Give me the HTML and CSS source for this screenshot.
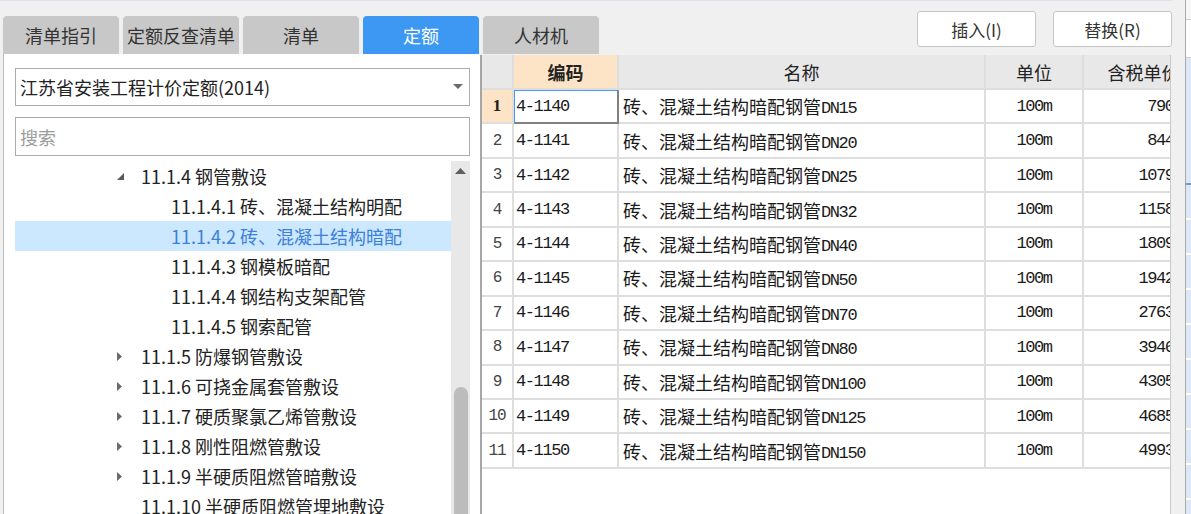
FILE: index.html
```html
<!DOCTYPE html>
<html lang="zh-CN">
<head>
<meta charset="utf-8">
<title>定额</title>
<link rel="stylesheet" href="styles.css">
</head>
<body>
<div class="app">
  <div class="mainarea">
    <div class="header">
      <div class="tabs">
        <div class="tab">清单指引</div>
        <div class="tab">定额反查清单</div>
        <div class="tab">清单</div>
        <div class="tab active">定额</div>
        <div class="tab">人材机</div>
      </div>
      <div class="actions">
        <div class="btn">插入(I)</div>
        <div class="btn">替换(R)</div>
      </div>
    </div>
    <div class="body">
      <div class="left">
        <div class="select">
          <span>江苏省安装工程计价定额(2014)</span>
          <svg class="caret" width="10" height="6" viewBox="0 0 10 6"><polygon points="0,0 10,0 5,5" fill="#6a6a6a"/></svg>
        </div>
        <div class="search">搜索</div>
        <div class="treewrap">
          <div class="tree">
            <div class="node l1"><span class="tg"><svg width="9" height="9" viewBox="0 0 9 9"><polygon points="8,1 8,8 1,8" fill="#5a5a5a"/></svg></span><span>11.1.4 钢管敷设</span></div>
            <div class="node l2"><span class="tg"></span><span>11.1.4.1 砖、混凝土结构明配</span></div>
            <div class="node l2 sel"><span class="tg"></span><span>11.1.4.2 砖、混凝土结构暗配</span></div>
            <div class="node l2"><span class="tg"></span><span>11.1.4.3 钢模板暗配</span></div>
            <div class="node l2"><span class="tg"></span><span>11.1.4.4 钢结构支架配管</span></div>
            <div class="node l2"><span class="tg"></span><span>11.1.4.5 钢索配管</span></div>
            <div class="node l1"><span class="tg"><svg width="7" height="11" viewBox="0 0 7 11"><polygon points="1,1 6,5.5 1,10" fill="#6a6a6a"/></svg></span><span>11.1.5 防爆钢管敷设</span></div>
            <div class="node l1"><span class="tg"><svg width="7" height="11" viewBox="0 0 7 11"><polygon points="1,1 6,5.5 1,10" fill="#6a6a6a"/></svg></span><span>11.1.6 可挠金属套管敷设</span></div>
            <div class="node l1"><span class="tg"><svg width="7" height="11" viewBox="0 0 7 11"><polygon points="1,1 6,5.5 1,10" fill="#6a6a6a"/></svg></span><span>11.1.7 硬质聚氯乙烯管敷设</span></div>
            <div class="node l1"><span class="tg"><svg width="7" height="11" viewBox="0 0 7 11"><polygon points="1,1 6,5.5 1,10" fill="#6a6a6a"/></svg></span><span>11.1.8 刚性阻燃管敷设</span></div>
            <div class="node l1"><span class="tg"><svg width="7" height="11" viewBox="0 0 7 11"><polygon points="1,1 6,5.5 1,10" fill="#6a6a6a"/></svg></span><span>11.1.9 半硬质阻燃管暗敷设</span></div>
            <div class="node l1"><span class="tg"></span><span>11.1.10 半硬质阻燃管埋地敷设</span></div>
          </div>
          <div class="scroll">
            <div class="up"><svg width="11" height="6" viewBox="0 0 11 6"><polygon points="0,6 11,6 5.5,0" fill="#5f5f5f"/></svg></div>
            <div class="thumb"></div>
          </div>
        </div>
      </div>
      <div class="grid">
        <div class="gtable">
          <div class="c hd"></div>
          <div class="c hd code-hd">编码</div>
          <div class="c hd">名称</div>
          <div class="c hd">单位</div>
          <div class="c hd">含税单价</div>

          <div class="c rn cur">1</div>
          <div class="c code focus"><span class="m">4-1140</span></div>
          <div class="c name"><span>砖、混凝土结构暗配钢管<span class="m">DN15</span></span></div>
          <div class="c unit"><span class="m">100m</span></div>
          <div class="c price"><span class="m">790.52</span></div>

          <div class="c rn"><span class="m">2</span></div>
          <div class="c code"><span class="m">4-1141</span></div>
          <div class="c name"><span>砖、混凝土结构暗配钢管<span class="m">DN20</span></span></div>
          <div class="c unit"><span class="m">100m</span></div>
          <div class="c price"><span class="m">844.37</span></div>

          <div class="c rn"><span class="m">3</span></div>
          <div class="c code"><span class="m">4-1142</span></div>
          <div class="c name"><span>砖、混凝土结构暗配钢管<span class="m">DN25</span></span></div>
          <div class="c unit"><span class="m">100m</span></div>
          <div class="c price"><span class="m">1079.86</span></div>

          <div class="c rn"><span class="m">4</span></div>
          <div class="c code"><span class="m">4-1143</span></div>
          <div class="c name"><span>砖、混凝土结构暗配钢管<span class="m">DN32</span></span></div>
          <div class="c unit"><span class="m">100m</span></div>
          <div class="c price"><span class="m">1158.21</span></div>

          <div class="c rn"><span class="m">5</span></div>
          <div class="c code"><span class="m">4-1144</span></div>
          <div class="c name"><span>砖、混凝土结构暗配钢管<span class="m">DN40</span></span></div>
          <div class="c unit"><span class="m">100m</span></div>
          <div class="c price"><span class="m">1809.47</span></div>

          <div class="c rn"><span class="m">6</span></div>
          <div class="c code"><span class="m">4-1145</span></div>
          <div class="c name"><span>砖、混凝土结构暗配钢管<span class="m">DN50</span></span></div>
          <div class="c unit"><span class="m">100m</span></div>
          <div class="c price"><span class="m">1942.05</span></div>

          <div class="c rn"><span class="m">7</span></div>
          <div class="c code"><span class="m">4-1146</span></div>
          <div class="c name"><span>砖、混凝土结构暗配钢管<span class="m">DN70</span></span></div>
          <div class="c unit"><span class="m">100m</span></div>
          <div class="c price"><span class="m">2763.38</span></div>

          <div class="c rn"><span class="m">8</span></div>
          <div class="c code"><span class="m">4-1147</span></div>
          <div class="c name"><span>砖、混凝土结构暗配钢管<span class="m">DN80</span></span></div>
          <div class="c unit"><span class="m">100m</span></div>
          <div class="c price"><span class="m">3946.64</span></div>

          <div class="c rn"><span class="m">9</span></div>
          <div class="c code"><span class="m">4-1148</span></div>
          <div class="c name"><span>砖、混凝土结构暗配钢管<span class="m">DN100</span></span></div>
          <div class="c unit"><span class="m">100m</span></div>
          <div class="c price"><span class="m">4305.19</span></div>

          <div class="c rn"><span class="m">10</span></div>
          <div class="c code"><span class="m">4-1149</span></div>
          <div class="c name"><span>砖、混凝土结构暗配钢管<span class="m">DN125</span></span></div>
          <div class="c unit"><span class="m">100m</span></div>
          <div class="c price"><span class="m">4685.72</span></div>

          <div class="c rn"><span class="m">11</span></div>
          <div class="c code"><span class="m">4-1150</span></div>
          <div class="c name"><span>砖、混凝土结构暗配钢管<span class="m">DN150</span></span></div>
          <div class="c unit"><span class="m">100m</span></div>
          <div class="c price"><span class="m">4993.40</span></div>
        </div>
      </div>
    </div>
  </div>
  <div class="side">
    <div class="side-gap"></div>
    <div class="pane">
      <div class="p1"></div>
      <div class="p2"></div>
      <div class="p3"></div>
      <div class="pr"></div>
      <div class="pr"></div>
      <div class="pr"></div>
      <div class="pr"></div>
      <div class="pr"></div>
      <div class="pr"></div>
      <div class="pr"></div>
      <div class="pr"></div>
      <div class="pr"></div>
    </div>
  </div>
</div>
</body>
</html>
```

FILE: styles.css
```css
* { box-sizing: border-box; }

html, body {
  margin: 0;
  padding: 0;
}

body {
  width: 1191px;
  height: 514px;
  overflow: hidden;
  background: #f0f0f0;
  font-family: "Noto Sans CJK SC", "Noto Sans", sans-serif;
  color: #222;
}

.app {
  display: flex;
  height: 514px;
}

.mainarea {
  width: 1172px;
  display: flex;
  flex-direction: column;
  border-top: 1px solid #dfe5ee;
}

.header {
  display: flex;
  height: 53px;
  padding-left: 3px;
  flex-shrink: 0;
}

.tabs {
  display: flex;
  gap: 4px;
  margin-top: 15px;
}

.tab {
  width: 116px;
  height: 38px;
  background: #c8c8c8;
  border-radius: 4px 4px 0 0;
  display: flex;
  align-items: center;
  justify-content: center;
  font-size: 18px;
  color: #333;
}

.tab.active {
  background: #3d98f4;
  color: #fff;
}

.actions {
  margin-left: auto;
  margin-top: 10px;
  display: flex;
  gap: 17px;
}

.btn {
  width: 119px;
  height: 36px;
  background: #fff;
  border: 1px solid #c6c6c6;
  border-radius: 3px;
  display: flex;
  align-items: center;
  justify-content: center;
  font-size: 17px;
  color: #333;
}

.body {
  flex: 1;
  display: flex;
  min-height: 0;
}

.left {
  width: 477px;
  margin-left: 3px;
  background: #fff;
  border-left: 1px solid #bdbdbd;
  padding: 14px 10px 0 11px;
  display: flex;
  flex-direction: column;
}

.select {
  height: 38px;
  border: 1px solid #ababab;
  display: flex;
  align-items: center;
  padding-left: 4px;
  padding-right: 6px;
  font-size: 18px;
  color: #222;
  flex-shrink: 0;
}

.caret {
  margin-left: auto;
}

.search {
  height: 39px;
  margin-top: 11px;
  border: 1px solid #ababab;
  display: flex;
  align-items: center;
  padding-left: 4px;
  font-size: 18px;
  color: #9c9c9c;
  flex-shrink: 0;
}

.treewrap {
  margin-top: 5px;
  flex: 1;
  display: flex;
  min-height: 0;
}

.tree {
  flex: 1;
  overflow: hidden;
}

.node {
  height: 30px;
  display: flex;
  align-items: center;
  font-size: 18px;
  color: #222;
  white-space: nowrap;
}

.node.l1 { padding-left: 98px; }
.node.l2 { padding-left: 128px; }

.node.sel {
  background: #cce8ff;
  color: #3c80d8;
}

.tg {
  width: 28px;
  display: flex;
  align-items: center;
  padding-left: 3px;
}

.scroll {
  width: 19px;
  background: #e8e8e8;
  display: flex;
  flex-direction: column;
  align-items: center;
}

.up {
  height: 18px;
  display: flex;
  align-items: center;
  justify-content: center;
  padding-top: 2px;
}

.thumb {
  width: 14px;
  margin-top: 208px;
  flex: 1;
  background: #bcbcbc;
  border-radius: 7px 7px 0 0;
}

.grid {
  width: 691px;
  margin-top: 1px;
  background: #fff;
  border-left: 2px solid #a6a6a6;
  border-right: 1px solid #c8c8c8;
  overflow: hidden;
}

.gtable {
  display: grid;
  grid-template-columns: 32px 105px 367px 98px 121px;
  grid-template-rows: 35px repeat(11, 34.45px);
  width: 730px;
}

.c {
  display: flex;
  align-items: center;
  border-right: 2px solid #dedede;
  border-bottom: 2px solid #dedede;
  font-size: 18px;
  color: #1a1a1a;
  white-space: nowrap;
  overflow: hidden;
}

.m {
  font-family: "Liberation Mono", "DejaVu Sans Mono", monospace;
  font-size: 17px;
  letter-spacing: -1.4px;
}

.name .m {
  vertical-align: 1px;
}

.hd {
  background: #e8e8e8;
  justify-content: center;
  color: #222;
}

.code-hd {
  background: #fde4c6;
  font-weight: bold;
}

.rn {
  justify-content: center;
  color: #444;
}

.rn .m {
  font-size: 16px;
  letter-spacing: -1px;
}

.rn.cur {
  background: #fde4c6;
  font-family: "Liberation Serif", serif;
  font-weight: bold;
  font-size: 17px;
  color: #222;
}

.code {
  padding-left: 2px;
}

.code.focus {
  border-left: 1px solid #4b9af0;
  border-top: 1px solid #4b9af0;
  border-right: 2px solid #808080;
  border-bottom: 2px solid #808080;
  padding-left: 1px;
}

.name {
  padding-left: 4px;
}

.unit {
  justify-content: center;
}

.price {
  justify-content: flex-end;
  padding-right: 3px;
}

.side {
  width: 19px;
  display: flex;
}

.side-gap {
  width: 13px;
  background: #f0f0f0;
}

.pane {
  flex: 1;
  border-left: 1px solid #a9a9a9;
  display: flex;
  flex-direction: column;
  background: #dce8f6;
}

.p1 {
  height: 20px;
  background: #f6f6f6;
  border-bottom: 1px solid #cfcfcf;
}

.p2 {
  height: 38px;
  background: #fff;
  border-bottom: 1px solid #cfcfcf;
}

.p3 {
  height: 127px;
  background: #dce8f6;
  border-bottom: 2px solid #7796bf;
}

.pr {
  height: 35px;
  background: #dce8f6;
  border-bottom: 2px solid #ffffff;
}
```
